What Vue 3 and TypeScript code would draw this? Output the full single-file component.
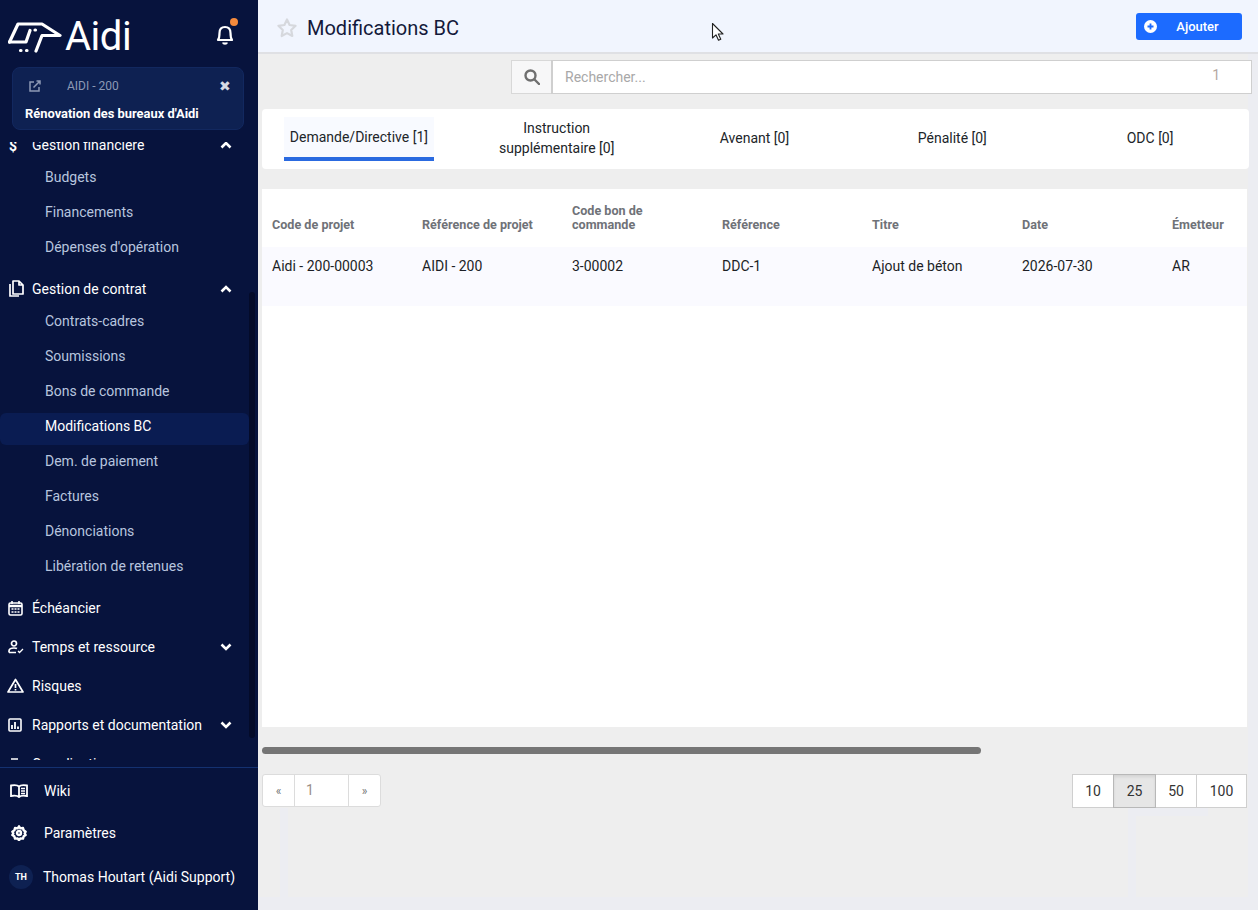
<template>
  <div class="app">
    <aside class="sidebar">
      <div class="brand">
        <div class="logo">
          <svg width="54" height="36" viewBox="0 0 54 36" fill="none" stroke="#fff" stroke-width="3.2" stroke-linejoin="round" stroke-linecap="round">
            <path d="M1.500 23 L10 5 H34 L52 16.500 H34 L28 32" />
            <path d="M1.500 23 H18 L22 11.500" />
            <path d="M27 11 h.5" />
            <path d="M12.500 31.500 h.5 M18.500 31.500 h.5" />
          </svg>
          <span class="logo-text">Aidi</span>
        </div>
        <div class="bell">
          <svg width="20" height="24" viewBox="0 0 20 24" fill="none" stroke="#fff" stroke-width="2.2">
            <path d="M3 18c1.500-2 1.500-4 1.500-7 0-3.500 2-6 5.500-6s5.500 2.500 5.500 6c0 3 0 5 1.500 7z" stroke-linejoin="round" />
            <path d="M8 20.500c.5 1.500 3.500 1.500 4 0" />
          </svg>
          <span class="bell-dot"></span>
        </div>
      </div>

      <div class="project-card">
        <div class="project-top">
          <svg class="ext-icon" width="12" height="12" viewBox="0 0 12 12" fill="none" stroke="#8d99b5" stroke-width="1.500">
            <path d="M10 7v4H1V2h4" />
            <path d="M4.500 7.500 11 1M7.500 1H11v3.500" />
          </svg>
          <span class="project-code">AIDI - 200</span>
          <span class="project-close">✖</span>
        </div>
        <div class="project-name">Rénovation des bureaux d'Aidi</div>
      </div>

      <div class="nav-wrap">
        <nav class="nav">
          <template v-for="item in menu" :key="item.label">
            <div class="nav-item">
              <span class="nav-icon" v-html="icons[item.icon]"></span>
              <span class="nav-label">{{ item.label }}</span>
              <svg v-if="item.chevron" class="chev" width="12" height="8" viewBox="0 0 12 8" fill="none" stroke="#fff" stroke-width="2.600">
                <path :d="item.chevron === 'up' ? 'M1.500 6.500 6 2l4.500 4.500' : 'M1.500 1.500 6 6l4.500-4.500'" />
              </svg>
            </div>
            <div v-if="item.children" class="sub-group">
              <div v-for="sub in item.children" :key="sub" class="sub-item" :class="{ active: sub === 'Modifications BC' }">{{ sub }}</div>
            </div>
          </template>
        </nav>
        <div class="side-scroll"></div>
      </div>

      <div class="side-footer">
        <div class="foot-row wiki">
          <svg width="18" height="14" viewBox="0 0 18 14" fill="none" stroke="#fff" stroke-width="1.800">
            <path d="M9 2.500C7.500 1 4 1 1 1.500v10.500c3-.5 6.500-.5 8 1 1.500-1.500 5-1.500 8-1V1.500C14 1 10.500 1 9 2.500zM9 2.500V13" />
            <path d="M11 4.500h4M11 7h4M11 9.500h4" stroke-width="1.300" />
          </svg>
          <span>Wiki</span>
        </div>
        <div class="foot-row params">
          <svg width="16" height="16" viewBox="0 0 24 24" fill="none" stroke="#fff" stroke-width="3.600" stroke-linejoin="round">
            <path d="M12 2l2 3 4-.5 1 3.500 3 2-1.500 2.500 1.500 2.500-3 2-1 3.500-4-.5-2 3-2-3-4 .5-1-3.500-3-2L3.500 12.500 2 10l3-2 1-3.500 4 .5z" />
            <circle cx="12" cy="12" r="3" />
          </svg>
          <span>Paramètres</span>
        </div>
        <div class="foot-row user">
          <span class="avatar">TH</span>
          <span>Thomas Houtart (Aidi Support)</span>
        </div>
      </div>
    </aside>

    <main class="main">
      <header class="topbar">
        <svg class="star" width="22" height="21" viewBox="0 0 22 21" fill="none" stroke="#d6d8dd" stroke-width="2.200">
          <path d="M11 2.500l2.600 5.500 6 .8-4.400 4.200 1.100 6L11 16.100 5.700 19l1.100-6L2.400 8.800l6-.8z" stroke-linejoin="round" />
        </svg>
        <h1 class="title">Modifications BC</h1>
        <button class="add-btn">
          <svg width="13" height="13" viewBox="0 0 13 13">
            <circle cx="6.500" cy="6.500" r="6.500" fill="#fff" />
            <path d="M6.500 3.500v6M3.500 6.500h6" stroke="#1c6bff" stroke-width="1.800" />
          </svg>
          <span>Ajouter</span>
        </button>
      </header>

      <div class="content">
        <div class="search-row">
          <div class="search-addon">
            <svg width="16" height="16" viewBox="0 0 16 16" fill="none" stroke="#6f6f6f" stroke-width="2.400">
              <circle cx="6.500" cy="6.500" r="5" />
              <path d="M10.500 10.500 15 15" stroke-linecap="round" />
            </svg>
          </div>
          <div class="search-input">
            <span class="placeholder">Rechercher...</span>
            <span class="search-count">1</span>
          </div>
        </div>

        <div class="tabs">
          <div class="tabs-inner">
            <div v-for="tab in tabs" :key="tab.label" class="tab" :class="{ selected: tab.selected }">
              <span class="tab-text">{{ tab.label }}</span>
            </div>
          </div>
        </div>

        <div class="table-card">
          <div class="table-head">
            <div v-for="col in columns" :key="col" class="cell">{{ col }}</div>
          </div>
          <div class="table-row">
            <div v-for="val in row" :key="val" class="cell">{{ val }}</div>
          </div>
        </div>

        <div class="hscroll"><div class="hscroll-thumb"></div></div>

        <div class="pager-row">
          <div class="pager">
            <span class="pg-arrow">«</span>
            <span class="pg-num">1</span>
            <span class="pg-arrow">»</span>
          </div>
          <div class="sizes">
            <span v-for="s in sizes" :key="s" class="size" :class="{ current: s === 25 }">{{ s }}</span>
          </div>
        </div>
      </div>

      <!-- leftover frame bands below the pager -->
      <span class="ghost ghost-left"></span>
      <span class="ghost ghost-right"></span>

      <svg class="cursor" width="14" height="20" viewBox="0 0 14 20">
        <path d="M1.500 1.500v14.500l3.500-3.200 2.500 5.500 2.300-1-2.500-5.300h4.700z" fill="#fff" stroke="#222" stroke-width="1.100" stroke-linejoin="round" />
      </svg>
    </main>
  </div>
</template>

<script setup lang="ts">
interface MenuItem {
  label: string
  icon: string
  chevron?: 'up' | 'down'
  children?: string[]
}

const icons: Record<string, string> = {
  dollar: '<svg width="12" height="16" viewBox="0 0 12 16" style="margin-top:3px"><text x="5" y="13" text-anchor="middle" font-family="Roboto" font-weight="700" font-size="14" fill="#fff">$</text></svg>',
  docs: '<svg width="16" height="17" viewBox="0 0 16 17" fill="none" stroke="#fff" stroke-width="1.700"><path d="M5 1h6l4 4v9H5zM11 1v4h4" stroke-linejoin="round"/><path d="M2 4v12h9"/></svg>',
  calendar: '<svg width="15" height="16" viewBox="0 0 15 16" fill="none" stroke="#fff"><rect x="1" y="3" width="13" height="12" rx="1.500" stroke-width="1.600"/><path d="M1 6h13" stroke-width="2.500"/><path d="M4 1v3M11 1v3" stroke-width="1.600"/><path d="M3.500 9h2M6.500 9h2M9.500 9h2M3.500 12h2M6.500 12h2M9.500 12h2" stroke-width="1.600"/></svg>',
  person: '<svg width="16" height="14" viewBox="0 0 16 14" fill="none" stroke="#fff" stroke-width="1.700"><circle cx="6" cy="3.500" r="2.500"/><path d="M1 12.500v-1.500c0-2 2-3 5-3 1.500 0 2.500.2 3 .5M1 12.500h7"/><path d="M10 11l1.500 1.500L15 9" stroke-width="1.300"/></svg>',
  warning: '<svg width="17" height="15" viewBox="0 0 17 15" fill="none" stroke="#fff" stroke-width="1.700" style="margin-left:-1px"><path d="M8.500 1.500 16 14H1z" stroke-linejoin="round"/><path d="M8.500 6v4M8.500 11v1.500"/></svg>',
  report: '<svg width="14" height="14" viewBox="0 0 14 14" fill="none" stroke="#fff"><rect x="1" y="1" width="12" height="12" rx="1" stroke-width="1.600"/><path d="M4 11V7M7 11V4M10 11V8.500" stroke-width="1.800"/></svg>',
  coord: '<svg width="14" height="14" viewBox="0 0 14 14" fill="none" stroke="#fff" stroke-width="1.600"><path d="M3 2h7M2 4v6h10V4"/></svg>',
}

const menu: MenuItem[] = [
  { label: 'Gestion financière', icon: 'dollar', chevron: 'up', children: ['Budgets', 'Financements', "Dépenses d'opération"] },
  { label: 'Gestion de contrat', icon: 'docs', chevron: 'up', children: ['Contrats-cadres', 'Soumissions', 'Bons de commande', 'Modifications BC', 'Dem. de paiement', 'Factures', 'Dénonciations', 'Libération de retenues'] },
  { label: 'Échéancier', icon: 'calendar' },
  { label: 'Temps et ressource', icon: 'person', chevron: 'down' },
  { label: 'Risques', icon: 'warning' },
  { label: 'Rapports et documentation', icon: 'report', chevron: 'down' },
  { label: 'Coordination', icon: 'coord' },
]

const tabs = [
  { label: 'Demande/Directive [1]', selected: true },
  { label: 'Instruction supplémentaire [0]' },
  { label: 'Avenant [0]' },
  { label: 'Pénalité [0]' },
  { label: 'ODC [0]' },
]

const columns = ['Code de projet', 'Référence de projet', 'Code bon de commande', 'Référence', 'Titre', 'Date', 'Émetteur']
const row = ['Aidi - 200-00003', 'AIDI - 200', '3-00002', 'DDC-1', 'Ajout de béton', '2026-07-30', 'AR']
const sizes = [10, 25, 50, 100]
</script>

<style>
html, body {
  margin: 0;
  height: 100%;
  overflow: hidden;
}
</style>

<style scoped>
.app {
  display: flex;
  width: 1258px;
  height: 910px;
  font-family: Roboto, "Liberation Sans", sans-serif;
  font-size: 14px;
  color: #212529;
  overflow: hidden;
}

/* sidebar */
.sidebar {
  width: 258px;
  flex: none;
  display: flex;
  flex-direction: column;
  background: #07133d;
  color: #fff;
}

.brand {
  height: 67px;
  flex: none;
  display: flex;
  align-items: flex-start;
  justify-content: space-between;
  padding: 19px 23px 0 8px;
  box-sizing: border-box;
}

.logo {
  display: flex;
  align-items: center;
  gap: 3px;
}

.logo-text {
  font-size: 40px;
  line-height: 36px;
  letter-spacing: -0.5px;
}

.bell {
  position: relative;
  margin-top: 3px;
  height: 24px;
}

.bell-dot {
  position: absolute;
  top: -4px;
  right: -3px;
  width: 8px;
  height: 8px;
  border-radius: 50%;
  background: #f58a3c;
}

.project-card {
  flex: none;
  height: 63px;
  margin: 0 14px 0 12px;
  box-sizing: border-box;
  padding: 0 12px 0 12px;
  background: #0e2152;
  border: 1px solid #12285f;
  border-radius: 8px;
}

.project-top {
  display: flex;
  align-items: center;
  height: 36px;
  font-size: 12px;
  color: #8d99b5;
}

.ext-icon {
  margin-left: 4px;
}

.project-code {
  margin-left: 26px;
  flex: 1;
}

.project-close {
  font-size: 14px;
  color: #d5d9e3;
}

.project-name {
  font-size: 12.9px;
  font-weight: 700;
  color: #fff;
  line-height: 20px;
}

.nav-wrap {
  position: relative;
  flex: 1;
  min-height: 0;
  overflow: hidden;
  margin-top: 12px;
}

.nav {
  margin-top: -17px;
}

.nav-item {
  display: flex;
  align-items: center;
  height: 39px;
  padding: 0 26px 0 8px;
  color: #fff;
  font-size: 14px;
}

.nav-icon {
  width: 24px;
  display: flex;
  align-items: center;
  flex: none;
}

.nav-label {
  flex: 1;
}

.sub-group {
  margin-top: -4px;
  padding-bottom: 4px;
}

.sub-item {
  height: 35px;
  line-height: 35px;
  padding-left: 45px;
  color: #b7c5df;
  font-size: 14px;
  margin-right: 9px;
}

.sub-item.active {
  position: relative;
  z-index: 0;
  color: #fff;
}

.sub-item.active::before {
  content: "";
  position: absolute;
  z-index: -1;
  inset: 4px 0 -1px 0;
  background: #0a1c52;
  border-radius: 6px;
}

.side-scroll {
  position: absolute;
  top: 150px;
  right: 3px;
  width: 6px;
  height: 446px;
  border-radius: 3px;
  background: #040b29;
}

.side-footer {
  flex: none;
  height: 143px;
  margin-top: 7px;
  box-sizing: border-box;
  border-top: 1px solid #143170;
  padding-top: 2px;
}

.foot-row {
  display: flex;
  align-items: center;
  height: 42px;
  font-size: 14px;
}

.foot-row.wiki {
  padding-left: 10px;
  gap: 16px;
}

.foot-row.params {
  padding-left: 11px;
  gap: 17px;
}

.foot-row.user {
  padding-left: 9px;
  gap: 10px;
  margin-top: 2px;
}

.avatar {
  width: 24px;
  height: 24px;
  flex: none;
  border-radius: 50%;
  background: #0e2152;
  font-size: 9px;
  font-weight: 700;
  display: flex;
  align-items: center;
  justify-content: center;
}

/* main */
.main {
  position: relative;
  flex: 1;
  min-width: 0;
  display: flex;
  flex-direction: column;
  background: #ecedf2;
}

.topbar {
  flex: none;
  height: 54px;
  box-sizing: border-box;
  display: flex;
  align-items: center;
  padding: 0 16px 0 18px;
  background: #f1f5fe;
  border-bottom: 2px solid #dfe0e4;
}

.star {
  margin-top: 2px;
}

.title {
  flex: 1;
  margin: 3px 0 0 9px;
  font-size: 20px;
  font-weight: 400;
  color: #14193a;
}

.add-btn {
  width: 106px;
  height: 27px;
  display: flex;
  align-items: center;
  padding: 0 0 0 8px;
  border: none;
  border-radius: 3px;
  background: #1c6bff;
  color: #fff;
  font-family: inherit;
  font-size: 13px;
  font-weight: 500;
}

.add-btn span {
  flex: 1;
  text-align: center;
  padding-right: 4px;
}

.content {
  flex: 1;
  min-height: 0;
  margin-bottom: 13px;
  margin-right: 10px;
  background: #eeeeee;
  padding: 6px 1px 0 4px;
  display: flex;
  flex-direction: column;
}

.search-row {
  flex: none;
  display: flex;
  height: 34px;
  margin-left: 249px;
  margin-right: -5px;
}

.search-addon {
  width: 40px;
  flex: none;
  box-sizing: border-box;
  display: flex;
  align-items: center;
  justify-content: center;
  background: #f7f7f8;
  border: 1px solid #d8d8d8;
  border-right: none;
}

.search-input {
  flex: 1;
  box-sizing: border-box;
  display: flex;
  align-items: center;
  justify-content: space-between;
  padding: 0 31px 0 12px;
  background: #fff;
  border: 1px solid #cfcfcf;
  border-left-width: 2px;
}

.placeholder {
  color: #a8a8a8;
}

.search-count {
  color: #b5a8a0;
  margin-top: -4px;
}

.tabs {
  flex: none;
  height: 60px;
  margin-top: 15px;
  margin-right: -2px;
  background: #fff;
  border-radius: 4px;
}

.tabs-inner {
  height: 100%;
  margin-left: -2px;
  display: grid;
  grid-template-columns: repeat(5, 1fr);
}

.tab {
  display: flex;
  align-items: center;
  justify-content: center;
  text-align: center;
  line-height: 20px;
  color: #212529;
  padding-bottom: 2px;
}

.tab-text {
  max-width: 130px;
}

.tab.selected {
  align-self: start;
  height: 44px;
  width: 150px;
  justify-self: center;
  box-sizing: border-box;
  margin-top: 8px;
  padding-bottom: 0;
  background: #f8faff;
  border-bottom: 4px solid #2a6ae0;
}

.tab.selected .tab-text {
  max-width: none;
}

.table-card {
  flex: none;
  height: 538px;
  margin-top: 20px;
  background: #fff;
}

.table-head,
.table-row {
  display: grid;
  grid-template-columns: repeat(7, 150px);
  overflow: hidden;
}

.table-head {
  height: 58px;
  box-sizing: border-box;
  padding-bottom: 15px;
  align-items: end;
  font-size: 12.6px;
  font-weight: 700;
  color: #6f7278;
  line-height: 14px;
}

.table-row {
  height: 59px;
  background: #fafaff;
  padding-top: 9px;
  box-sizing: border-box;
  line-height: 20px;
  color: #1c1f26;
}

.cell {
  padding: 0 10px;
}

.hscroll {
  flex: none;
  height: 8px;
  margin-top: 20px;
}

.hscroll-thumb {
  width: 719px;
  height: 7px;
  border-radius: 4px;
  background: #757575;
}

.pager-row {
  flex: none;
  display: flex;
  justify-content: space-between;
  margin-top: 19px;
}

.pager {
  display: flex;
  height: 33px;
  box-sizing: border-box;
  background: #fff;
  border: 1px solid #dcdcdc;
  border-radius: 3px;
}

.pg-arrow {
  width: 31px;
  display: flex;
  align-items: center;
  justify-content: center;
  font-size: 12px;
  color: #777;
}

.pg-num {
  width: 55px;
  box-sizing: border-box;
  padding-left: 11px;
  line-height: 31px;
  color: #9a8f88;
  border-left: 1px solid #dcdcdc;
  border-right: 1px solid #dcdcdc;
}

.sizes {
  display: flex;
  height: 34px;
}

.size {
  display: flex;
  align-items: center;
  justify-content: center;
  width: 43px;
  box-sizing: border-box;
  background: #fff;
  border: 1px solid #cfcfcf;
  margin-left: -1px;
  color: #333;
}

.size:first-child {
  width: 42px;
  margin-left: 0;
}

.size:nth-child(3) {
  width: 42px;
}

.size:last-child {
  width: 51px;
}

.size.current {
  position: relative;
  background: #e6e6e6;
  border-color: #b8b8b8;
  box-shadow: inset 0 2px 3px rgba(0, 0, 0, 0.08);
}

.ghost {
  position: absolute;
  background: #ecedf2;
}

.ghost-left {
  left: 22px;
  top: 808px;
  width: 8px;
  height: 89px;
}

.ghost-right {
  left: 870px;
  top: 808px;
  width: 80px;
  height: 89px;
  background: none;
  border-top: 8px solid #ecedf2;
  border-left: 8px solid #ecedf2;
  box-sizing: border-box;
}

.cursor {
  position: absolute;
  left: 453px;
  top: 22px;
}
</style>
